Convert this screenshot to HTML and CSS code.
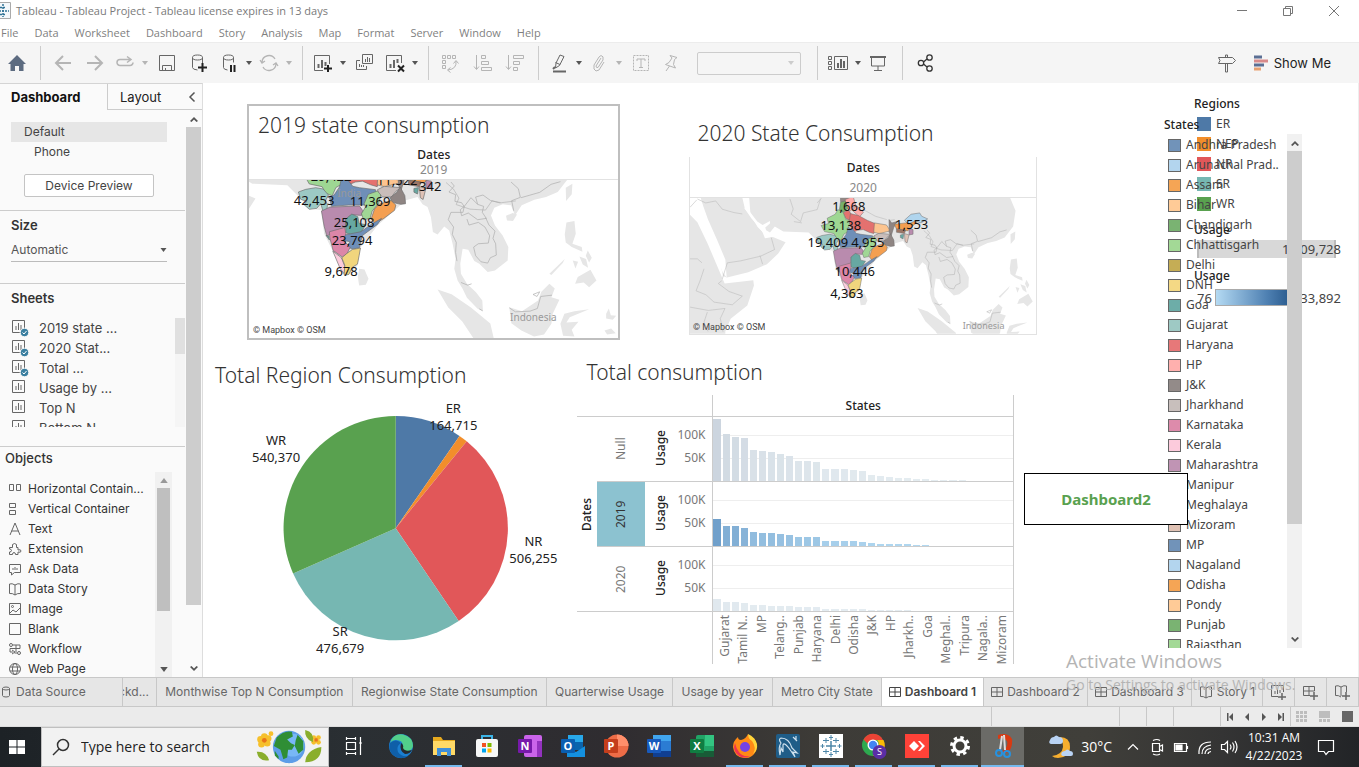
FILE: index.html
```html
<!DOCTYPE html>
<html lang="en">
<head>
<meta charset="utf-8">
<title>Tableau - Tableau Project</title>
<link rel="stylesheet" href="styles.css">
</head>
<body>
<svg class="defs" aria-hidden="true">
  <symbol id="caret" viewBox="0 0 6 4"><path d="M0 0h6L3 4z" fill="currentColor"/></symbol>
  <symbol id="sheet" viewBox="0 0 18 18"><path d="M1.500 1.500h12v12h-12z" fill="none" stroke="#666"/><path d="M5 7v4M7.500 4v7M10 6v5" stroke="#666"/></symbol>
  <symbol id="sheetused" viewBox="0 0 18 18"><path d="M1.500 1.500h12v12h-12z" fill="none" stroke="#666"/><path d="M5 7v4M7.500 4v7M10 6v5" stroke="#666"/><circle cx="13.500" cy="13.500" r="4.300" fill="#3a7fa0" stroke="#fafafa"/><path d="M11.500 13.500l1.500 1.500 2.500-3" fill="none" stroke="#fff"/></symbol>
  <symbol id="dash" viewBox="0 0 12 12"><path d="M.5 1.500h11v9H.5zM.5 6h11M6 1.500v9" fill="none" stroke="currentColor"/></symbol>
  <symbol id="book" viewBox="0 0 14 14"><path d="M7 3v10M7 3Q4 1 1.500 2v9.500Q4.500 11 7 13q2.500-2 5.500-1.500V2Q10 1 7 3z" fill="none" stroke="currentColor"/></symbol>
  <symbol id="chev" viewBox="0 0 8 6"><path d="M0 5l4-4 4 4-1.500 1L4 3.500 1.500 6z" fill="currentColor"/></symbol>

  <symbol id="asia" viewBox="-400 100 1540 640" overflow="visible">
    <g fill="#e6e6e6">
      <path d="M-420 60H955L962 110 985 165 975 230 940 275 905 290 870 298 832 315 812 345 800 315 775 312 750 322 740 345 752 375 775 405 792 440 790 480 752 510 730 515 705 490 690 482 672 448 655 445 648 490 650 520 668 550 695 575 714 600 716 632 700 625 668 592 655 565 640 540 630 505 634 475 625 430 615 390 600 378 580 402 566 395 560 350 550 320 535 312 520 290 485 300 400 375 350 440 340 495 310 525 290 500 240 400 232 330 200 325 165 290 130 255 25 250-10 230-30 255-70 230-110 185-120 60z"/>
      <path d="M345 505l16 2 12 28-8 18-20 2-4-26zM785 346l20-8 13 4-12 20-18-2zM964 262l20-12-2 32-17 20zM966 366l24-4 4 38-10 30 28 10 2 14-32-14-18-14-3-24zM1000 530l38-22 18 32-22 20-16-14-26 4zM1005 468l20 8 6 26-16-10zM1030 450l12 22-8 14-10-20zM985 480l16 4-8 20zM915 520l46-44-6 12-34 36z"/>
      <path d="M580 567l42 14 58 40 58 48 14 60h-54l-44-66-42-42zM795 620l38 12 48-32 10-26 24-24 16 14-10 26 24 8-20 42-4 30-22 32-30 6-38-18-30-22zM960 640l30-8 44-6-58 24-10 16 36-2-20 24 8 20-34-2-8-36zM1085 640l8-16 6 20 16 2-10 12-20-4zM1080 690l20-6 14 14-26 4z"/>
    </g>
    <g transform="translate(-385 -228) scale(1.3755)">
      <path d="M0 150h185L175 246l8 34 20 24 18 30 14 14 8 20 24-4 38 16-22 34-34 32-56 24-64 16-12-4-8-40-22-48L50 246H0zM0 280l40 40 30 62 34 80 18 42 86-10 2 16-20 60-50 40-16 38v90H0z" fill="#e6e6e6"/>
      <path d="M50 250L72 312 100 375 124 432 128 486 116 470 96 420 66 366 36 300 20 258z" fill="#fff"/>
      <path d="M180 276l16 10 24 32 16 10 22-12 0 8-14 12 4 14-12 0-16-22-18-20z" fill="#fff"/>
      <g fill="none" stroke="#b4b4b4" stroke-width="1.500">
        <path d="M40 250l25 12 30-6 20 25 35 10 25 4M18 275l20-22M115 490l15-48 40-6 60-14 42-20-10-36M228 420l8 26M18 430l22 0 14 12M60 460l-12 36-12 30 30 12 24 22 55 8 30-26-40-14-32-24 10-8M18 575l55 10 50-6-14 30 8 40M70 590l-10 30 12 28M318 250l10 30-6 16 28 22 8-26 42-10 10-32M330 318l24 4M400 262l14-16M535 280l40 22 34 10M615 315l18-3M720 345l16 14 12 20-6 14 30 10 34 2 14-20 20 4 32-4"/>
      </g>
      <g stroke="#6d6d6d" stroke-width="1.500" stroke-linejoin="round">
        <path fill="#918885" d="M470 244l22-4 4 14-14 10-12-6z"/>
        <path fill="#ffaaa9" d="M484 252l24-10 8 28-16 16-12-10z"/>
        <path fill="#ffaaa9" d="M505 284l14-14 20 20-12 14z"/>
        <path fill="#77b069" d="M470 260l14-4 8 22-12 12-14-2z"/>
        <path fill="#e4716f" d="M478 292l16-10 8 14-2 20-14-8z"/>
        <path fill="#9ed793" d="M412 330l22-6-4-16 24-12 8-14 16 8 8 22 12 2-4 34-14 8-8 18-14-6-8-14-28-6z"/>
        <path fill="#e4716f" d="M500 294l24 6 26 14 24 10 2 14-6 16-14-4-18-8-16 2-14 6-8-18-4-14z"/>
        <path fill="#fcc48f" d="M572 322l36 6 12 18-34 8-16-4z"/>
        <path fill="#8f8583" d="M616 312l8 10 16-4-10 18-8 26-6-12z"/>
        <path fill="#f49f51" d="M632 326l34-4 24-8 14 2-18 16-14 14-34-6z"/>
        <path fill="#b0d5ee" d="M662 314l20-18 26-4 6 10 18 8-20 12-18-6-20 10z"/>
        <path fill="#9c7565" d="M638 340l28 4-4 10-24-4z"/>
        <path fill="#b98bae" d="M676 340l12 2 0 14-12 2z"/>
        <path fill="#67a8a2" d="M650 358l10-2-2 14-8-4z"/>
        <path fill="#dfc2b6" d="M662 354l14 4-6 24-6-4z"/>
      </g>
    </g>
    <g stroke="#6d6d6d" stroke-width="2" stroke-linejoin="round">
      <path fill="#9cc9c4" d="M163 275l22-8 30-5 22 4 16 18-9 17 6 12-2 20-12-3-6-20-12 14-22 3-16-14 8-10-18-6z"/>
      <path fill="#6f8fb8" d="M256 290l14-6 16-24 6-26 20 6 14 18 20 4 48 6 4 14-14 14-14 18-56 0-52 4z"/>
      <path fill="#c9bdba" d="M400 268l20-10 50 4-16 12-12 16-26 0-12-8z"/>
      <path fill="#8f8583" d="M468 260l14 26 2 24-14 2-26-6-6-14 20-16z"/>
      <path fill="#b98bae" d="M232 332l26-12 88-3 10 14-4 14-30-2-18 14 0 24-24 10-32 16-8-30z"/>
      <path fill="#a0d795" d="M372 282l28-10 10 12-6 24-20 24-6 22-20 4-6-18 12-20-4-10z"/>
      <path fill="#f49f51" d="M404 312l36-12 15 14-4 16-32 24-26 16-12-14 10-30z"/>
      <path fill="#67a8a2" d="M305 356l18-15 18 8 4 20 20 4-14 22-30 8-16-6z"/>
      <path fill="#6f8fb8" d="M300 404l50-10 34-24 28-16-12 18-46 34-8 36-22 4-16-8 10-14-20-4z"/>
      <path fill="#dc86a8" d="M256 394l46-13 3 19-7 20 20 20-8 18-15 12-28-20-10-38z"/>
      <path fill="#67a8a2" d="M246 405l8 2 2 12z"/>
      <path fill="#fccbdc" d="M266 452l26 20 10 26-2 22-12-16z"/>
      <path fill="#f1d57d" d="M293 472l14-12 18-13 24-4-4 22-5 26-15 9-11 22-14 2 2-30z"/>
    </g>
    <g fill="none" stroke="#ababab" stroke-width="2">
      <path d="M620 245l10 12-16 18 20 8-2 20 20 4 8 12M660 318l-4 18-36 0-8 22 16 22-4 22 12 24-2 30 4 26M660 318l20-26 20 20 18 6-4 18 12 18-26 4-28-20-20 8-4-18zM668 356l6 18 28-8 20 14 14 26-4 22-30 2-14 10 6 26 16 18 20 4 8-16 18-8-2-34-8-16 6-22-18-18-10-22M700 312l-6-22 22-6 22 16 30 8M800 245l22 20 6 26-26 10 6 30M830 292l56-16 34-24 28-8M650 546l20 8 12-4M795 622l18 12 44-2 22-8 10-36 34-4M866 582l20-8-8 14zM705 625l10 6"/>
    </g>
  </symbol>
</svg>

<header class="titlebar">
  <svg class="applogo" viewBox="0 0 16 18"><path d="M-1 .5h11.500v16H-1" fill="#f4f8fb" stroke="#aaa"/><path d="M3 2v13M-1 9h10M0 5.500h6M0 12.500h6" stroke="#2f7195" stroke-width="1.500" stroke-dasharray="2 1"/></svg>
  <span class="apptitle">Tableau - Tableau Project - Tableau license expires in 13 days</span>
  <div class="wincontrols">
    <button aria-label="Minimize"><svg viewBox="0 0 12 12"><path d="M1 5.500h10"/></svg></button>
    <button aria-label="Restore"><svg viewBox="0 0 12 12"><path d="M1.500 3.500h7v7h-7zM3.500 3.500v-2h7v7h-2"/></svg></button>
    <button aria-label="Close"><svg viewBox="0 0 12 12"><path d="M1 1l10 10M11 1L1 11"/></svg></button>
  </div>
</header>
<nav class="menubar">
  <button>File</button><button>Data</button><button>Worksheet</button><button>Dashboard</button><button>Story</button><button>Analysis</button><button>Map</button><button>Format</button><button>Server</button><button>Window</button><button>Help</button>
</nav>

<div class="toolbar">
  <div class="group home"><button class="tb" aria-label="Home"><svg viewBox="0 0 20 20"><path d="M10 2l9 9h-2.500v7H12v-5H8v5H3.500v-7H1z" fill="#5c6b80"/></svg></button></div>
  <div class="group">
    <button class="tb off" aria-label="Undo"><svg viewBox="0 0 20 20"><path d="M18 10H3M10 3l-7 7 7 7" stroke-width="2"/></svg></button>
    <button class="tb off" aria-label="Redo"><svg viewBox="0 0 20 20"><path d="M2 10h15M10 3l7 7-7 7" stroke-width="2"/></svg></button>
    <button class="tb sm off" aria-label="Replay"><svg viewBox="0 0 20 20"><path d="M10 6.500H5a3 3 0 000 6h10a3 3 0 003-3M9 6.500h6M12 3.500l4 3-4 3" stroke-width="1.500"/></svg></button>
    <button class="car off" aria-label="Replay options"><svg><use href="#caret"/></svg></button>
    <button class="tb" aria-label="Save"><svg viewBox="0 0 20 20"><path d="M2.500 2.500h15v15h-15zM5.500 17v-4.500h9V17M8.500 17v-2"/></svg></button>
    <button class="tb" aria-label="New data source"><svg viewBox="0 0 20 20"><path d="M3.500 4.500v10q0 2 5 2.500M13.500 4.500v6"/><ellipse cx="8.500" cy="4.500" rx="5" ry="2.500"/><path d="M9 14.500h9M13.500 10v9" stroke="#222" stroke-width="2"/></svg></button>
    <button class="tb sm" aria-label="Pause updates"><svg viewBox="0 0 20 20"><path d="M4.500 4.500v10q0 2 4 2.500M14.500 4.500v5"/><ellipse cx="9.500" cy="4.500" rx="5" ry="2.500"/><path d="M12 12v7M15.500 12v7" stroke="#222" stroke-width="2"/></svg></button>
    <button class="car" aria-label="Pause options"><svg><use href="#caret"/></svg></button>
    <button class="tb sm off" aria-label="Refresh"><svg viewBox="0 0 20 20"><path d="M3 9a7 7 0 0113-3M17 11a7 7 0 01-13 3M1 7l2 3 3-2M19 13l-2-3-3 2" stroke-width="1.300"/></svg></button>
    <button class="car off" aria-label="Refresh options"><svg><use href="#caret"/></svg></button>
  </div>
  <div class="group">
    <button class="tb sm" aria-label="New worksheet"><svg viewBox="0 0 20 20"><path d="M10 17.500H1.500v-15h15V11"/><path d="M5.500 11v4M9 7v8M12.500 9v4" stroke-width="2"/><path d="M11 15.500h8M15 12v7" stroke="#222" stroke-width="2"/></svg></button>
    <button class="car" aria-label="New worksheet options"><svg><use href="#caret"/></svg></button>
    <button class="tb" aria-label="Duplicate"><svg viewBox="0 0 20 20"><path d="M7.500 1.500h10v9h-10zM5 7.500H1.500v9h10V13M10.500 6v3M12.500 4v5M14.500 5v4M4.500 11v3M6.500 12v2M8.500 12v2"/></svg></button>
    <button class="tb sm" aria-label="Clear sheet"><svg viewBox="0 0 20 20"><path d="M11 17.500H1.500v-15h15V10"/><path d="M5.500 11v4M9 7v8M12.500 6v4" stroke-width="2"/><path d="M13 12.500l6 6M19 12.500l-6 6" stroke="#222" stroke-width="2"/></svg></button>
    <button class="car" aria-label="Clear options"><svg><use href="#caret"/></svg></button>
  </div>
  <div class="group">
    <button class="tb off" aria-label="Swap rows and columns"><svg viewBox="0 0 20 20"><path d="M1.500 2.500h3v3h-3zM6.500 2.500h3v3h-3zM11.500 2.500h3v3h-3zM1.500 7.500h3v3h-3zM1.500 12.500h3v3h-3zM15 8q1 8-8 9M12.500 10.500l2.500-3 2.500 3M9.500 14.500l-3 2.500 3 2.500"/></svg></button>
    <button class="tb off" aria-label="Sort ascending"><svg viewBox="0 0 20 20"><path d="M3.500 2v14M1 13.500l2.500 3 2.500-3M8.500 2.500h4v3h-4zM8.500 8.500h7v3h-7zM8.500 14.500h10v3h-10z"/></svg></button>
    <button class="tb off" aria-label="Sort descending"><svg viewBox="0 0 20 20"><path d="M3.500 2v14M1 13.500l2.500 3 2.500-3M8.500 2.500h10v3h-10zM8.500 8.500h6v3h-6zM8.500 14.500h4v3h-4z"/></svg></button>
  </div>
  <div class="group">
    <button class="tb sm" aria-label="Highlight"><svg viewBox="0 0 20 20"><path d="M11 2l4 1.500-4.500 9-4 2.500.5-5zM6.500 9.500l4.500 2"/><path d="M6 14l-2 2" stroke-width="2"/><path d="M4 18.500h13" stroke-width="2"/></svg></button>
    <button class="car" aria-label="Highlight options"><svg><use href="#caret"/></svg></button>
    <button class="tb sm off" aria-label="Group"><svg viewBox="0 0 20 20"><path d="M12 5l-5 8q0 2 2 1.500L14 7q1-4-2-4.500L10 4l-5 8q-1 5 2 6l3-1 5-8"/></svg></button>
    <button class="car off" aria-label="Group options"><svg><use href="#caret"/></svg></button>
    <button class="tb off" aria-label="Mark labels"><svg viewBox="0 0 20 20"><path d="M2.500 2.500h15v15h-15z" stroke-dasharray="2 1"/><path d="M6 8V6h8v2M10 6v9M8 14.500h4"/></svg></button>
    <button class="tb sm off" aria-label="Pin"><svg viewBox="0 0 20 20"><path d="M9 2.500l7 2-2.500 2-1 5 2 3.500-10-3.500 3.500-2 3-4.500zM8.500 13L5 18"/></svg></button>
    <span class="fit"><select aria-label="Fit" disabled><option></option></select><svg><use href="#caret"/></svg></span>
  </div>
  <div class="group wide">
    <button class="tb sm" aria-label="Show cards"><svg class="w22" viewBox="0 0 22 20"><path d="M1.500 3.500h3v3h-3zM1.500 8.500h3v3h-3zM1.500 13.500h3v3h-3zM7.500 3.500h13v13h-13z"/><path d="M11 10v5M14 6v9M17 8v7" stroke-width="2"/></svg></button>
    <button class="car" aria-label="Card options"><svg><use href="#caret"/></svg></button>
    <button class="tb sm" aria-label="Presentation"><svg viewBox="0 0 20 20"><path d="M3.500 4v9h13V4M10 13v4M6 17.500h8"/><path d="M2 4h16" stroke-width="2"/></svg></button>
  </div>
  <div class="group wide2"><button class="tb" aria-label="Share"><svg viewBox="0 0 20 20" class="dark"><circle cx="6" cy="10" r="2.700"/><circle cx="14.500" cy="4.500" r="2.700"/><circle cx="14.500" cy="15.500" r="2.700"/><path d="M8.500 9L12 6M8.500 11l3.500 3"/></svg></button></div>
  <div class="toolright">
    <button class="tb" aria-label="Guide"><svg viewBox="0 0 20 20"><path d="M1.500 4.500h14l3 3-3 3h-14l1.500-3zM8.500 11v8h2v-8M8.500 4V2h2v2"/></svg></button>
    <button class="showme"><svg viewBox="0 0 16 16"><path d="M1 2h8" stroke="#5b6f94" stroke-width="3"/><path d="M1 6h14" stroke="#d88a8a" stroke-width="3"/><path d="M1 10h10" stroke="#5b6f94" stroke-width="3"/><path d="M1 14h7" stroke="#e8a070" stroke-width="3"/></svg>Show Me</button>
  </div>
</div>

<div class="work">
  <aside class="side">
    <div class="sidetabs"><button class="on">Dashboard</button><button class="lay">Layout<svg viewBox="0 0 8 12"><path d="M6.500 1.500L2 6l4.500 4.500"/></svg></button></div>
    <div class="sidebody">
      <div class="sidecol">
        <section class="devices">
          <button class="device on">Default</button>
          <button class="device phone">Phone</button>
          <button class="preview">Device Preview</button>
        </section>
        <section class="size">
          <h2>Size</h2>
          <label class="sizesel"><select aria-label="Size"><option>Automatic</option></select><svg><use href="#caret"/></svg></label>
        </section>
        <section class="sheets">
          <h2>Sheets</h2>
          <div class="listwrap">
            <ul>
              <li><svg><use href="#sheetused"/></svg>2019 state ...</li>
              <li><svg><use href="#sheetused"/></svg>2020 Stat...</li>
              <li><svg><use href="#sheetused"/></svg>Total ...</li>
              <li><svg><use href="#sheet"/></svg>Usage by ...</li>
              <li><svg><use href="#sheet"/></svg>Top N</li>
              <li><svg><use href="#sheet"/></svg>Bottom N</li>
            </ul>
            <div class="sb thin"><i></i></div>
          </div>
        </section>
        <section class="objects">
          <h2>Objects</h2>
          <div class="objwrap">
            <ul>
              <li><svg viewBox="0 0 14 14"><path d="M1.500 2.500h4v6h-4zM8.500 2.500h4v6h-4z"/></svg>Horizontal Contain...</li>
              <li><svg viewBox="0 0 14 14"><path d="M1.500 1.500h6v4h-6zM1.500 8.500h6v4h-6z"/></svg>Vertical Container</li>
              <li><svg viewBox="0 0 14 14"><path d="M2 13L7 1l5 12M3.500 9h7"/></svg>Text</li>
              <li><svg viewBox="0 0 14 14"><path d="M1.500 5.500h3q-1-4 2-4t2 4H10v2.500q3-1 3 1t-3 1v2.500H7.500q0-2-1.500-2t-1.500 2h-3V10q2 0 2-1.500T1.500 7z"/></svg>Extension</li>
              <li><svg viewBox="0 0 14 14"><path d="M1.500 2.500h11v8h-6l-3 2.500v-2.500h-2zM5 8V6M7 8V5M9 8V6"/></svg>Ask Data</li>
              <li><svg><use href="#book"/></svg>Data Story</li>
              <li><svg viewBox="0 0 14 14"><path d="M1.500 1.500h11v11h-11zM2 11l3-3 3 2 4-4"/><circle cx="4.500" cy="4.500" r="1"/></svg>Image</li>
              <li><svg viewBox="0 0 14 14"><path d="M1.500 1.500h11v11h-11z"/></svg>Blank</li>
              <li><svg viewBox="0 0 14 14"><circle cx="3" cy="3" r="1.500"/><circle cx="11" cy="11" r="1.500"/><path d="M5 3h7v3.500H2V10h3M4 8l3 2-3 2M8 3v7M6.500 11H9"/></svg>Workflow</li>
              <li><svg viewBox="0 0 14 14"><circle cx="7" cy="7" r="5.500"/><ellipse cx="7" cy="7" rx="2.500" ry="5.500"/><path d="M2 5h10M2 9h10"/></svg>Web Page</li>
            </ul>
            <div class="sb objsb"><svg><use href="#caret"/></svg><i></i><svg><use href="#caret"/></svg></div>
          </div>
        </section>
      </div>
      <div class="sb main"><svg><use href="#chev"/></svg><i></i><svg><use href="#chev"/></svg></div>
    </div>
  </aside>

  <main class="canvas">
    <div class="row one">
      <article class="sheet sel">
        <h1>2019 state consumption</h1>
        <div class="mapbox">
          <div class="maphead"><b>Dates</b><span>2019</span></div>
          <svg class="map" viewBox="0 0 369 158">
            <svg x="0" y="0" width="369" height="158" viewBox="15 239 1107 474"><use href="#asia" x="-400" y="100" width="1540" height="640"/></svg>
            <g class="faint"><text x="100" y="17">India</text><text x="284" y="141">Indonesia</text></g>
            <g class="num"><text x="82" y="1">29,422</text><text x="148" y="5">11,522</text><text x="181" y="11">342</text><text x="65" y="25">42,453</text><text x="121" y="26">11,369</text><text x="105" y="47">25,108</text><text x="103" y="65">23,794</text><text x="92" y="96">9,678</text></g>
            <text class="credit" x="4" y="153">© Mapbox © OSM</text>
          </svg>
        </div>
      </article>
      <article class="sheet plain">
        <h1>2020 State Consumption</h1>
        <div class="mapbox">
          <div class="maphead tall"><b>Dates</b><span>2020</span></div>
          <svg class="map" viewBox="0 0 346 136">
            <svg x="0" y="0" width="346" height="136" viewBox="18 247 1038 408"><g transform="translate(280 165.600) scale(.727)"><use href="#asia" x="-400" y="100" width="1540" height="640"/></g></svg>
            <g class="faint"><text class="sm" x="294" y="131">Indonesia</text></g>
            <g class="num"><text x="159" y="13">1,668</text><text x="151" y="32">13,138</text><text x="222" y="31">1,553</text><text x="138" y="49">19,409</text><text x="178" y="49">4,955</text><text x="165" y="78">10,446</text><text x="157" y="100">4,363</text></g>
            <text class="credit" x="3" y="132">© Mapbox © OSM</text>
          </svg>
        </div>
      </article>
    </div>

    <div class="row two">
      <article class="sheet pie">
        <h1>Total Region Consumption</h1>
        <svg viewBox="0 0 355 280">
          <g transform="translate(180.500 138)">
            <path fill="#4e79a7" d="M0 0V-112A112 112 0 0163.700-92.100z"/>
            <path fill="#f28e2b" d="M0 0L63.700-92.100A112 112 0 0170.900-86.700z"/>
            <path fill="#e15759" d="M0 0L70.900-86.700A112 112 0 0162.900 92.700z"/>
            <path fill="#76b7b2" d="M0 0L62.900 92.700A112 112 0 01-102.500 45.200z"/>
            <path fill="#59a14f" d="M0 0L-102.500 45.200A112 112 0 010-112z"/>
          </g>
          <g class="num"><text x="238" y="23">ER</text><text x="238" y="40">164,715</text><text x="61" y="55">WR</text><text x="61" y="72">540,370</text><text x="318" y="156">NR</text><text x="318" y="173">506,255</text><text x="125" y="246">SR</text><text x="125" y="263">476,679</text></g>
        </svg>
      </article>
      <article class="sheet bars">
        <h1>Total consumption</h1>
        <div class="chart">
          <div class="colhead">States</div>
          <div class="dates"><b>Dates</b></div>
          <div class="year">Null</div><div class="axis"><b>Usage</b><span class="k1">100K</span><span class="k2">50K</span></div><div class="plot" data-series="0"></div>
          <div class="year hot">2019</div><div class="axis"><b>Usage</b><span class="k1">100K</span><span class="k2">50K</span></div><div class="plot" data-series="1"></div>
          <div class="year">2020</div><div class="axis"><b>Usage</b><span class="k1">100K</span><span class="k2">50K</span></div><div class="plot" data-series="2"></div>
          <div class="foot"></div><div class="names"></div>
        </div>
      </article>
    </div>

    <div class="regions">
      <h3>Regions</h3>
      <ul><li><i class="c-er"></i>ER</li><li><i class="c-nep"></i>NEP</li><li><i class="c-nr"></i>NR</li><li><i class="c-sr"></i>SR</li><li><i class="c-wr"></i>WR</li></ul>
      <h3>Usage</h3>
      <div class="sizebar"><span>1,709,728</span></div>
      <h3>Usage</h3>
      <div class="ramp"><span>76</span><i></i><span>133,892</span></div>
    </div>
    <div class="states">
      <h3>States</h3>
      <div class="statebox"><ul id="states"></ul><div class="sb"><svg><use href="#chev"/></svg><i></i><svg><use href="#chev"/></svg></div></div>
    </div>
    <button class="goto">Dashboard2</button>
    <div class="activate"><strong>Activate Windows</strong><span>Go to Settings to activate Windows.</span></div>
  </main>
</div>

<nav class="tabs">
  <button class="src"><svg viewBox="0 0 12 12"><path d="M2.500 2.500v7q0 1.500 3.500 1.500t3.500-1.500v-7"/><ellipse cx="6" cy="2.500" rx="3.500" ry="1.500"/></svg>Data Source</button>
  <button class="cut"><span>ckd...</span></button>
  <button>Monthwise Top N Consumption</button>
  <button>Regionwise State Consumption</button>
  <button>Quarterwise Usage</button>
  <button>Usage by year</button>
  <button>Metro City State</button>
  <button class="dashtab on"><svg><use href="#dash"/></svg>Dashboard 1</button>
  <button class="dashtab"><svg><use href="#dash"/></svg>Dashboard 2</button>
  <button class="dashtab"><svg><use href="#dash"/></svg>Dashboard 3</button>
  <button class="story"><svg><use href="#book"/></svg>Story 1</button>
  <button class="new" aria-label="New worksheet"><svg viewBox="0 0 16 16"><path d="M8 12.500H1.500v-11h12V8M5 7v3M7.500 5v5M10 6v3"/><path d="M8 13h8M12 9v7" stroke-width="1.500"/></svg></button>
  <button class="new" aria-label="New dashboard"><svg viewBox="0 0 16 16"><path d="M8 11.500H1.500v-9h11V7M1.500 7h11M7 2.500v9"/><path d="M8 12h8M12 8v8" stroke-width="1.500"/></svg></button>
  <button class="new" aria-label="New story"><svg viewBox="0 0 16 16"><path d="M7 3v9M7 3Q4 1 1.500 2v9.500Q4.500 11 7 13M7 3q3-2 5.500-1V8"/><path d="M8 12h8M12 8v8" stroke-width="1.500"/></svg></button>
</nav>

<div class="status">
  <span class="s1"></span><span class="s2"></span><span class="s3"></span><span class="s4"></span>
  <div class="pager">
    <button aria-label="First"><svg viewBox="0 0 8 8"><path d="M1 0h1.500v8H1zM7 0v8L3 4z"/></svg></button>
    <button aria-label="Previous"><svg viewBox="0 0 8 8"><path d="M6 0v8L2 4z"/></svg></button>
    <button aria-label="Next"><svg viewBox="0 0 8 8"><path d="M2 0v8l4-4z"/></svg></button>
    <button aria-label="Last"><svg viewBox="0 0 8 8"><path d="M5.500 0H7v8H5.500zM1 0v8l4-4z"/></svg></button>
  </div>
  <div class="views">
    <button aria-label="Sheet sorter"><svg viewBox="0 0 12 12"><path fill="#bdbdbd" d="M0 0h3v3H0zM4 0h3v3H4zM8 0h3v3H8zM0 4h3v3H0zM4 4h3v3H4zM8 4h3v3H8zM0 8h3v3H0zM4 8h3v3H4zM8 8h3v3H8z"/></svg></button>
    <button aria-label="Filmstrip"><svg viewBox="0 0 12 12"><path fill="#bdbdbd" d="M0 0h11v7H0zM0 8h3v3H0zM4 8h3v3H4zM8 8h3v3H8z"/></svg></button>
    <button aria-label="Tabs"><svg viewBox="0 0 12 12"><path fill="#666" d="M0 0h11v11H0z"/></svg></button>
  </div>
</div>

<footer class="taskbar">
  <button class="start" aria-label="Start"><svg viewBox="0 0 16 16"><path fill="#fff" d="M0 1h7.500v6.500H0zM8.500 1H16v6.500H8.500zM0 8.500h7.500V15H0zM8.500 8.500H16V15H8.500z"/></svg></button>
  <label class="search">
    <svg class="lens" viewBox="0 0 18 18"><circle cx="11" cy="7" r="5.500"/><path d="M7 11l-6 6"/></svg>
    <input type="search" placeholder="Type here to search" aria-label="Type here to search">
    <svg class="earth" viewBox="0 0 76 40">
      <g fill="#f6c02c"><circle cx="8" cy="17" r="3.500"/><circle cx="14" cy="16" r="3.500"/><circle cx="7" cy="12" r="3.500"/><circle cx="15" cy="11" r="3.500"/><circle cx="11" cy="9" r="3.500"/><circle cx="18" cy="6" r="2.500"/><circle cx="63" cy="10" r="2.500"/><circle cx="68" cy="10" r="2.500"/><circle cx="63" cy="15" r="2.500"/><circle cx="68" cy="15" r="2.500"/></g><circle cx="11" cy="13" r="2.500" fill="#e8751a"/><circle cx="65.500" cy="12.500" r="2" fill="#e8751a"/>
      <path d="M3 25q10-1 13 9Q5 36 3 25zM54 2q10 2 8 13Q53 11 54 2zM54 36q1-13 17-16 0 16-17 16z" fill="#8aae2c"/>
      <circle cx="37" cy="20" r="17" fill="#5d9de8"/><circle cx="41" cy="18" r="12" fill="#78b7f6"/>
      <path d="M24 10q8-8 16-6l1 5-6 3 4 4 4 2-3 5-4 0-1 8-4 2-3-10-7-4zM46 7l6 7 0 9-5 4-4-8 1-6zM22 24l4 6 0 3-4-4z" fill="#2f8e35"/>
    </svg>
  </label>
  <button class="app view" aria-label="Task view"><svg viewBox="0 0 26 26" class="line"><path d="M5.500 7V4M14.500 7V4M5.500 9.500h9v7h-9zM5.500 19v3M14.500 19v3M5.500 5.500h9M5.500 20.500h9M19.500 4v18M18 10h3"/></svg></button>
  <button class="app" aria-label="Edge"><svg viewBox="0 0 26 26"><circle cx="13" cy="13" r="12" fill="#1b7fd1"/><path d="M2 10Q5 0 15 1.500 25 4 25 13q-1 6-8 5-4-1-2-5 0-6-7-6-4 0-6 3z" fill="#52cf8a"/><path d="M2 10q6-5 11 0-5 3-3 9 3 5 10 4-8 5-15-1-5-5-3-12z" fill="#0f5fa8"/><path d="M13 10q3 2 2 5 2 4 9 2-2 4-7 4-6-3-4-11z" fill="#262b2f"/></svg></button>
  <button class="app run" aria-label="File Explorer"><svg viewBox="0 0 26 26"><path d="M2 4h8l2 3h12v15H2z" fill="#e6a91e"/><path d="M2 8h22v14H2z" fill="#ffd966"/><path d="M6 15h14v8h-4v-4h-6v4H6z" fill="#3f8fd9"/></svg></button>
  <button class="app" aria-label="Store"><svg viewBox="0 0 26 26"><path d="M8 7V3h10v4" fill="none" stroke="#3cb4e7" stroke-width="2"/><rect x="2" y="6" width="22" height="18" rx="2" fill="#f7f7f7"/><path fill="#f25022" d="M8 10h4v4H8z"/><path fill="#7fba00" d="M13.500 10h4v4h-4z"/><path fill="#00a4ef" d="M8 15.500h4v4H8z"/><path fill="#ffb900" d="M13.500 15.500h4v4h-4z"/></svg></button>
  <button class="app" aria-label="OneNote"><svg viewBox="0 0 26 26"><rect x="7" y="2" width="18" height="22" rx="2" fill="#ca64ea"/><path d="M20 8h5v16h-5z" fill="#9332bf"/><rect x="1" y="6" width="14" height="14" rx="1" fill="#7719aa"/><text x="8" y="17">N</text></svg></button>
  <button class="app" aria-label="Outlook"><svg viewBox="0 0 26 26"><path d="M8 2h15v14H8z" fill="#28a8ea"/><path d="M15 9h8v8h-8z" fill="#0a64ad"/><path d="M7 14l9 5 9-6v11H7z" fill="#1490df"/><rect x="1" y="6" width="14" height="14" rx="1" fill="#0a5eb0"/><text x="8" y="17">O</text></svg></button>
  <button class="app" aria-label="PowerPoint"><svg viewBox="0 0 26 26"><circle cx="14" cy="13" r="11.500" fill="#ed6c47"/><path d="M14 1.500A11.500 11.500 0 0125.500 13H14z" fill="#ff8f6b"/><rect x="1" y="6" width="14" height="14" rx="1" fill="#c43e1c"/><text x="8" y="17">P</text></svg></button>
  <button class="app" aria-label="Word"><svg viewBox="0 0 26 26"><rect x="7" y="2" width="18" height="22" rx="2" fill="#2b7cd3"/><path d="M7 2h18v6H7z" fill="#41a5ee"/><path d="M7 18h18v6H7z" fill="#103f91"/><rect x="1" y="6" width="14" height="14" rx="1" fill="#185abd"/><text x="8" y="17">W</text></svg></button>
  <button class="app" aria-label="Excel"><svg viewBox="0 0 26 26"><rect x="7" y="2" width="18" height="22" rx="2" fill="#21a366"/><path d="M16 2h9v11h-9z" fill="#33c481"/><path d="M7 18h18v6H7z" fill="#185c37"/><rect x="1" y="6" width="14" height="14" rx="1" fill="#107c41"/><text x="8" y="17">X</text></svg></button>
  <button class="app run" aria-label="Firefox"><svg viewBox="0 0 26 26"><path d="M16 1q1 4 4 5l2-1q4 8 2 13-4 8-12 7Q2 24 1 14q0-6 5-10 0 3 3 3 5-1 7-6z" fill="#ff8a16"/><path d="M16 1q0 5 4 7 5 7 1 13 5-4 4-10Q23 4 16 1z" fill="#ffd43a"/><path d="M3 10q-3 8 4 13 6 3 11 0-8 1-11-4-3-4-4-9z" fill="#f0344e"/><circle cx="13" cy="14" r="5" fill="#7542e5"/></svg></button>
  <button class="app run" aria-label="MySQL Workbench"><svg viewBox="0 0 26 26"><rect x="1" y="1" width="24" height="24" rx="2" fill="#1f5d88"/><path d="M5 22Q3 14 6 10 3 6 6 5q8 0 11 10l5 5-4-1 2 5-4-6Q9 8 8 12l0 7-2-4zM18 4l4 4M21 3l0 4" fill="none" stroke="#cfe1ee" stroke-width="1.200"/></svg></button>
  <button class="app run" aria-label="Tableau"><svg viewBox="0 0 26 26"><path fill="#fff" d="M1 1h24v24H1z"/><path d="M13 8v10M8 13h10" stroke="#4c86a8" stroke-width="1.500"/><path d="M13 2v5M11 4.500h4M13 19v5M11 21.500h4M2.500 13h4M4.500 11v4M19.500 13h4M21.500 11v4M5 7.500h6M8 5v5M15 7.500h6M18 5v5M5 18.500h6M8 16v5M15 18.500h6M18 16v5" stroke="#4c86a8"/></svg></button>
  <button class="app run" aria-label="Chrome"><svg viewBox="0 0 26 26"><circle cx="12" cy="12" r="11" fill="#2da94f"/><path d="M2.500 6.500A11 11 0 0122 7H12a5 5 0 00-5 4z" fill="#ea4335"/><path d="M22.500 7A11 11 0 0112 23l5-9q2-4-1-7z" fill="#fbbc05"/><circle cx="12" cy="12" r="5.500" fill="#fff"/><circle cx="12" cy="12" r="4.200" fill="#4285f4"/><circle cx="18.500" cy="19" r="7" fill="#5b2ea6"/><text class="tiny" x="18.500" y="22">S</text></svg></button>
  <button class="app run" aria-label="AnyDesk"><svg viewBox="0 0 26 26"><path fill="#ff4238" d="M1 1h24v24H1z"/><path d="M10 8l5 5-5 5-5-5zM14 8l2 0 5 5-5 5-2 0 4-5z" fill="#fff"/></svg></button>
  <button class="app run" aria-label="Settings"><svg viewBox="0 0 26 26"><circle cx="13" cy="13" r="6" fill="none" stroke="#fff" stroke-width="3"/><circle cx="13" cy="13" r="8.500" fill="none" stroke="#fff" stroke-width="3" stroke-dasharray="3.400 3.280"/></svg></button>
  <button class="app run on" aria-label="Snipping Tool"><svg viewBox="0 0 26 26"><path d="M8 2q10-3 14 4 1 10-5 14l-6-1q8-5 6-11-3-4-9-2z" fill="#d83a12"/><path d="M12 3l-2 14M14 2l1 15" stroke="#ddd" stroke-width="2"/><circle cx="9" cy="20" r="3" fill="none" stroke="#2792e0" stroke-width="2"/><circle cx="17" cy="21" r="3" fill="none" stroke="#2792e0" stroke-width="2"/></svg></button>
  <div class="tray">
    <button class="weather"><svg viewBox="0 0 26 26"><path d="M12 3q10 0 10 10T10 24q-4 0-6-2 10-1 11-9 0-6-3-10z" fill="#f7ae2e"/><path d="M3 10q-3-1-1-4 1-3 4-3 2-3 5 0 4 0 4 4 0 3-3 3zM15 22q-3-1-1-4 2-1 3-1 2-3 5 0 3 0 3 3 0 2-2 2z" fill="#b9d3f4"/></svg>30°C</button>
    <button aria-label="Hidden icons"><svg viewBox="0 0 18 18" class="line"><path d="M4 11.500l5-5 5 5"/></svg></button>
    <button aria-label="Meet now"><svg viewBox="0 0 18 18" class="line"><path d="M4.500 5.500h7v8h-7zM11.500 8.500l3-1.500v6l-3-1.500M5 2.500q4-2 7 0M5 16q4 2 7 0"/></svg></button>
    <button aria-label="Battery"><svg viewBox="0 0 18 18" class="line"><path d="M2.500 5.500h12v8h-12zM15.500 8v3"/><path d="M4 7h6v5H4z" fill="#fff"/></svg></button>
    <button aria-label="Wi-Fi"><svg viewBox="0 0 18 18" class="line"><path d="M3 16Q2 4 15 4M6 16q0-8 9-9M9 16q0-5 6-5.500M12 16q0-2 3-2.500"/></svg></button>
    <button aria-label="Volume"><svg viewBox="0 0 18 18" class="line"><path d="M1.500 6.500h3l3-3v11l-3-3h-3zM10 6.500q2 2.500 0 5M12.500 4.500q3 4.500 0 9M15 3q4 6 0 12"/></svg></button>
    <div class="clock"><span>10:31 AM</span><span>4/22/2023</span></div>
    <button class="note" aria-label="Notifications"><svg viewBox="0 0 18 18" class="line"><path d="M1.500 2.500h15v11h-5L9 16.500l-2-3H1.500z"/></svg></button>
  </div>
</footer>
<script src="script.js"></script>
</body>
</html>
```
FILE: styles.css
```css
* { box-sizing: border-box; }
body { margin: 0; height: 100vh; display: flex; flex-direction: column; background: #fff; font: 12px/16px "Open Sans", "Noto Sans", sans-serif; color: #333; overflow: hidden; }
button, select, input { font: inherit; color: inherit; border: 0; background: none; padding: 0; margin: 0; }
ul { list-style: none; margin: 0; padding: 0; }
h1, h2, h3 { margin: 0; }
svg { display: block; flex: none; }
.defs { position: absolute; width: 0; height: 0; }

.titlebar { flex: none; display: flex; align-items: center; height: 22px; color: #7a7a7a; font-size: 11px; }
.applogo { width: 16px; height: 18px; }
.apptitle { flex: 1; }
.wincontrols { display: flex; padding-right: 2px; }
.wincontrols button { width: 46px; height: 20px; display: grid; place-items: center; }
.wincontrols svg { width: 12px; height: 12px; fill: none; stroke: #777; }
.menubar { flex: none; display: flex; gap: 16px; height: 20px; padding: 2px 0 0 1px; color: #7f7f7f; font-size: 11px; }

.toolbar { flex: none; display: flex; align-items: center; height: 41px; background: #f5f5f5; border-top: 1px solid #ececec; }
.group { display: flex; align-items: center; height: 34px; padding: 0 7px 0 6px; border-right: 1px solid #ccc; }
.group.home { width: 41px; padding: 0 0 0 1px; }
.group.wide { padding-right: 10px; }
.group.wide2 { border: 0; }
.tb { width: 32px; height: 28px; display: grid; place-items: center; }
.tb.sm { width: 28px; }
.tb svg { width: 20px; height: 20px; fill: none; stroke: #666; }
.tb svg.w22 { width: 22px; }
.tb svg.dark { stroke: #333; stroke-width: 1.300; }
.home svg { stroke: none; }
.tb.off svg { stroke: #b5b5b5; }
.car { width: 12px; height: 28px; display: grid; place-items: center; color: #555; }
.car.off { color: #b5b5b5; }
.car svg { width: 6px; height: 4px; }
.fit { display: flex; align-items: center; width: 104px; height: 23px; margin: 0 9px 0 12px; border: 1px solid #ccc; border-radius: 2px; color: #ccc; padding-right: 5px; }
.fit select { flex: 1; appearance: none; }
.fit svg { width: 8px; height: 4px; }
.toolright { margin-left: auto; display: flex; align-items: center; padding-right: 28px; }
.showme { display: flex; align-items: center; gap: 5px; font: 13px/16px Inter, sans-serif; color: #222; margin-left: 10px; }
.showme svg { width: 16px; height: 16px; }

.work { flex: 1; display: flex; min-height: 0; }
.side { width: 203px; flex: none; display: flex; flex-direction: column; background: #fafafa; border-right: 1px solid #ddd; font: 13px/20px Inter, sans-serif; color: #444; border-top: 1px solid #d4d4d4; }
.sidetabs { display: flex; height: 26px; }
.sidetabs button { text-align: left; padding-left: 11px; color: #222; }
.sidetabs .on { width: 107px; font-weight: 700; color: #111; }
.sidetabs .lay { flex: 1; display: flex; justify-content: space-between; align-items: center; padding: 0 6px 0 12px; border-left: 1px solid #ccc; border-bottom: 1px solid #ccc; }
.lay svg { width: 8px; height: 12px; fill: none; stroke: #555; stroke-width: 1.500; }
.sidebody { flex: 1; display: flex; min-height: 0; }
.sidecol { flex: 1; display: flex; flex-direction: column; min-width: 0; }
.side h2 { font-size: 13px; line-height: 20px; font-weight: 600; color: #333; }
.side section { border-top: 1px solid #ccc; margin-right: 1px; padding: 4px 0 0 11px; }
.side .devices { border: 0; padding: 12px 18px 13px 11px; display: flex; flex-direction: column; font-size: 12px; }
.device { text-align: left; height: 20px; padding-left: 13px; }
.device.on { background: #e6e6e6; }
.device.phone { padding-left: 23px; }
.preview { height: 23px; margin: 12px 13px 0; border: 1px solid #c4c4c4; border-radius: 2px; background: #fff; line-height: 20px; }
.side .size { height: 73px; padding-right: 18px; }
.sizesel { display: flex; align-items: center; border-bottom: 1px solid #bbb; height: 24px; margin-top: 3px; font-size: 12px; color: #555; }
.sizesel select { flex: 1; appearance: none; }
.sizesel svg { width: 7px; height: 4px; }
.side .sheets { height: 163px; }
.side .objects h2 { font-weight: 500; }
.listwrap { display: flex; height: 109px; overflow: hidden; margin-top: 10px; }
.listwrap ul { flex: 1; }
.sheets li { display: flex; align-items: center; gap: 10px; height: 20px; }
.sheets li svg { width: 18px; height: 18px; }
.sb { display: flex; flex-direction: column; align-items: center; width: 15px; background: #f1f1f1; color: #555; }
.sb i { width: 100%; background: #cdcdcd; }
.sb svg { width: 8px; height: 6px; margin: 6px 0 5px; }
.sb svg:last-child { margin-top: auto; transform: rotate(180deg); }
.sb.thin { width: 10px; background: #f5f5f5; }
.thin i { height: 36px; background: #e0e0e0; }
.sb.main { background: #fafafa; margin-right: 1px; }
.main i { flex: 0 0 478px; }
.side .objects { flex: 1; display: flex; flex-direction: column; min-height: 0; padding: 1px 13px 0 5px; font-size: 12px; }
.objwrap { flex: 1; display: flex; min-height: 0; margin-top: 4px; }
.objwrap ul { flex: 1; padding: 7px 0 0 3px; overflow: hidden; white-space: nowrap; }
.objects li { display: flex; align-items: center; gap: 6px; height: 20px; color: #333; }
.objects li svg { width: 14px; height: 14px; fill: none; stroke: #666; color: #666; }
.objsb { width: 17px; }
.objsb i { width: 13px; height: 123px; background: #bfbfbf; }
.objsb svg { width: 8px; height: 5px; }
.objsb svg:first-child { transform: rotate(180deg); color: #999; }
.objsb svg:last-child { transform: none; }

.canvas { flex: 1; position: relative; border-right: 1px solid #eee; font-family: "Noto Sans", sans-serif; }
.row { display: flex; align-items: flex-start; }
.row.one { padding: 21px 321px 0 44px; gap: 69px; }
.row.two { padding: 18px 344px 0 12px; gap: 7px; }
.sheet { min-width: 0; }
.sheet h1 { font: 300 21px/28px "Noto Sans", "Open Sans", sans-serif; color: #333; white-space: nowrap; }
.sel { flex: 370 1 0; border: 2px solid #bfbfbf; }
.plain { flex: 348 1 0; padding-top: 15px; }
.sel h1 { padding: 5px 0 8px 9px; }
.plain h1 { padding: 0 0 10px 8px; }
.mapbox { border: 1px solid #e2e2e2; border-top: 0; }
.sel .mapbox { border-width: 0; }
.maphead { display: flex; flex-direction: column; align-items: center; height: 33px; line-height: 15px; border-bottom: 1px solid #e2e2e2; }
.maphead.tall { height: 41px; padding-top: 1px; line-height: 20px; }
.maphead span { color: #888; }
b, h3, .colhead { font-weight: 500; color: #222; }
.map { width: 100%; height: auto; overflow: hidden; }
.num text { font-size: 13px; fill: #111; text-anchor: middle; }
.pie .num text { fill: #222; }
.faint text { font-size: 10px; fill: #999; text-anchor: middle; }
.faint text.sm { font-size: 9px; }
.credit { font: 9px Roboto, sans-serif; fill: #444; }
.pie { flex: 355 1 0; padding-top: 3px; }
.pie svg { width: 100%; height: auto; margin-top: 1px; }
.bars { flex: 436 1 0; }
.bars h1 { padding-left: 9px; }

.chart { display: grid; grid-template: 21px repeat(3, 65px) 53px / 20px 48px 67px 1fr; margin-top: 9px; line-height: 14px; color: #777; }
.colhead { grid-column: 4; text-align: center; border: 1px solid #ccc; border-width: 0 1px; line-height: 22px; }
.dates { grid-column: 1; grid-row: 2 / 5; border-top: 1px solid #ccc; }
.year { grid-column: 2; font-size: 12px; border-bottom: 1px solid #ccc; }
.year:nth-child(3) { border-bottom: 1px solid #ccc; }
.year.hot { background: #8cc2d0; color: #333; }
.dates, .year { display: grid; place-items: center; }
.dates b, .year, .axis b { writing-mode: vertical-rl; transform: rotate(180deg); }
.axis { display: grid; grid-template-columns: 32px 1fr; grid-template-rows: 11px 23px 23px; border-top: 1px solid #ccc; text-align: right; padding-right: 7px; }
.axis b { grid-row: 1 / 4; justify-self: center; align-self: center; text-align: center; margin-top: 5px; }
.k1 { grid-area: 2 / 2; }
.k2 { grid-area: 3 / 2; }
.plot { display: grid; grid-template-columns: repeat(33, 1fr); align-items: end; border: 1px solid #ccc; border-bottom: 0; background: linear-gradient(#eee, #eee) 0 18px / 100% 1px no-repeat, linear-gradient(#eee, #eee) 0 41px / 100% 1px no-repeat; }
.plot i { margin-right: 2px; }
.foot { grid-column: 1 / 4; border-top: 1px solid #ccc; }
.names { grid-column: 4; display: grid; grid-template-columns: repeat(33, 1fr); border: 1px solid #ccc; border-bottom: 0; overflow: hidden; padding-top: 3px; }
.names span { writing-mode: vertical-rl; transform: rotate(180deg); justify-self: center; align-self: start; white-space: nowrap; line-height: 14px; }

.regions { position: absolute; right: 9px; top: 11px; width: 155px; color: #444; }
.regions h3, .states h3 { font-size: 12px; line-height: 20px; }
.regions li { display: flex; align-items: center; gap: 5px; height: 20px; }
.regions li i { width: 14px; height: 14px; margin-left: 3px; }
.c-er { background: #4e79a7; } .c-nep { background: #f28e2b; } .c-nr { background: #e15759; } .c-sr { background: #76b7b2; } .c-wr { background: #59a14f; }
.regions ul { margin-bottom: 6px; }
.sizebar { display: flex; justify-content: flex-end; background: #d8d8d8; border: 1px solid #bbb; border-width: 0 2px; height: 18px; margin: 0 13px 8px 3px; font-size: 13px; line-height: 18px; }
.sizebar span { margin-right: -7px; }
.ramp { display: flex; align-items: center; gap: 3px; margin-top: 3px; font-size: 13px; padding-left: 3px; }
.ramp i { width: 75px; height: 17px; border: 1px solid #aaa; background: linear-gradient(90deg, #b4daf3, #4e80b2 70%, #2b5c8f); }
.states { position: absolute; right: 56px; top: 32px; width: 138px; color: #444; }
.statebox { display: flex; height: 514px; overflow: hidden; }
.statebox ul { flex: 1; white-space: nowrap; padding-top: 1px; }
.states h3 { line-height: 19px; }
.states li { display: flex; align-items: center; gap: 5px; height: 20px; padding-left: 4px; }
.states li i { width: 13px; height: 13px; border: 1px solid #666; }
.states .sb i { flex: 0 0 373px; }
.goto { position: absolute; right: 170px; top: 390px; width: 164px; height: 52px; background: #fff; border: 1px solid #000; font-size: 15px; font-weight: 700; color: #59a14f; }
.activate { position: absolute; right: 56px; bottom: -18px; width: 236px; display: flex; flex-direction: column; gap: 2px; color: #b4b4b4; white-space: nowrap; font-family: "Open Sans", sans-serif; z-index: 2; }
.activate strong { font-weight: 400; font-size: 19px; line-height: 24px; }
.activate span { font-size: 14px; line-height: 20px; }

.tabs { flex: none; display: flex; height: 30px; background: #e6e6e6; border: 1px solid #c8c8c8; border-width: 1px 0; font: 12px/16px Inter, sans-serif; color: #666; }
.tabs button { flex: 1 1 auto; display: flex; align-items: center; justify-content: center; gap: 4px; border-right: 1px solid #c8c8c8; white-space: nowrap; padding: 0 4px; }
.tabs .src { flex: 0 0 123px; justify-content: flex-start; padding-left: 0; }
.tabs .cut { flex: 0 0 34px; overflow: hidden; justify-content: flex-end; padding-right: 7px; }
.tabs .dashtab { flex: 0 0 104px; }
.tabs .on { flex-basis: 102px; background: #fff; color: #444; font-weight: 600; }
.tabs svg { width: 12px; height: 12px; fill: none; stroke: #666; }
.tabs .story { flex: 0 0 71px; }
.tabs .story svg { width: 14px; height: 14px; }
.tabs .new { flex: 0 0 32px; }
.tabs .new svg { width: 16px; height: 16px; }
.status { flex: none; display: flex; height: 20px; background: #ebebeb; justify-content: flex-end; border-bottom: 1px solid #ddd; }
.status > span { border-left: 1px solid #c8c8c8; }
.s1 { width: 128px; } .s2, .s3 { width: 27px; } .s4 { width: 47px; }
.pager { display: flex; align-items: center; border: 1px solid #c8c8c8; border-width: 0 1px; width: 71px; justify-content: space-around; }
.pager svg { width: 8px; height: 8px; fill: #555; }
.views { display: flex; align-items: center; width: 68px; justify-content: space-around; }
.views svg { width: 12px; height: 12px; }

.taskbar { flex: none; display: flex; align-items: stretch; height: 40px; background: linear-gradient(90deg, #1d2226, #2a2f33 26%, #2f2c30 45%, #3d3b37 60%, #403f3a 80%, #343434 90%, #222427); color: #fff; }
.taskbar button { display: grid; place-items: center; }
.start { width: 41px; padding-right: 8px !important; }
.start svg { width: 16px; height: 16px; }
.search { display: flex; align-items: center; width: 288px; background: #f2f2f2; border: 1px solid #c0c0c0; color: #333; padding-left: 10px; }
.lens { width: 18px; height: 18px; fill: none; stroke: #333; stroke-width: 1.500; }
.search input { flex: 1; min-width: 0; padding-left: 11px; font-size: 14px; }
.search input::placeholder { color: #222; opacity: 1; }
.earth { width: 76px; height: 38px; }
.app { width: 43px; border-bottom: 2px solid transparent !important; }
.app.view { width: 50px; }
.app.run { border-image: linear-gradient(90deg, transparent 10%, #76b9ed 10%, #76b9ed 90%, transparent 90%) 1; border-width: 0 0 2px !important; }
.app.on { background: #6b6b67; border-image: none; border-bottom-color: #76b9ed !important; }
.app svg { width: 26px; height: 26px; }
.app text { font: 700 11px "Open Sans", sans-serif; fill: #fff; text-anchor: middle; }
.app text.tiny { font-size: 9px; font-weight: 400; }
.line { fill: none; stroke: #fff; stroke-width: 1.200; }
.tray { flex: 1; display: flex; align-items: center; justify-content: flex-end; padding-right: 21px; }
.tray svg { width: 18px; height: 18px; }
.tray button { width: 24px; }
.tray .weather { display: flex; align-items: center; gap: 7px; width: auto; font-size: 14px; margin-right: 9px; }
.tray .weather svg { width: 26px; height: 26px; }
.clock { display: flex; flex-direction: column; text-align: center; width: 60px; line-height: 18px; margin: 0 10px 0 3px; white-space: nowrap; }
```
FILE: script.js
```js
const series = [
  [62, 47, 44, 43, 31, 30, 29, 27, 25, 20, 20, 19, 12, 12, 12, 11, 10, 6, 5, 4, 3, 3, 2, 2, 1, 1, 1, 1],
  [27, 20, 20, 18, 14, 13, 13, 12, 11, 9, 9, 9, 5, 5, 5, 5, 4, 3, 2, 2, 2, 2, 1, 1],
  [12, 9, 9, 8, 6, 6, 5, 5, 5, 4, 4, 4, 2, 2, 2, 2, 2, 1, 1, 1, 1, 1]
];
const ends = [
  [[204, 213, 223], [229, 237, 241]],
  [[112, 160, 203], [180, 218, 242]],
  [[224, 232, 238], [229, 237, 242]]
];
const mix = (a, b, t) => `rgb(${a.map((v, i) => Math.round(v + (b[i] - v) * t)).join(',')})`;

document.querySelectorAll('.plot').forEach((plot, s) => {
  const peak = series[s][0];
  series[s].forEach(v => {
    const bar = document.createElement('i');
    bar.style.height = `${v / 64 * 100}%`;
    bar.style.background = mix(ends[s][1], ends[s][0], v / peak);
    plot.append(bar);
  });
});

const names = ['Gujarat', 'Tamil N..', 'MP', 'Telang..', 'Punjab', 'Haryana', 'Delhi', 'Odisha', 'J&K', 'HP', 'Jharkh..', 'Goa', 'Meghal..', 'Tripura', 'Nagala..', 'Mizoram'];
names.forEach((name, i) => {
  const label = document.createElement('span');
  label.textContent = name;
  label.style.gridColumn = (i + 1) * 2;
  label.style.gridRow = 1;
  document.querySelector('.names').append(label);
});

const states = [
  ['Andhra Pradesh', '#7193b9'], ['Arunachal Prad..', '#b3d5ee'], ['Assam', '#f5a555'], ['Bihar', '#ffcb97'],
  ['Chandigarh', '#7ab372'], ['Chhattisgarh', '#a3d996'], ['Delhi', '#c5ad55'], ['DNH', '#f4d985'],
  ['Goa', '#6dada8'], ['Gujarat', '#9ec9c4'], ['Haryana', '#e77879'], ['HP', '#ffb0ae'], ['J&K', '#938b89'],
  ['Jharkhand', '#c8bfbc'], ['Karnataka', '#dd8bab'], ['Kerala', '#fccbdc'], ['Maharashtra', '#c094b4'],
  ['Manipur', '#dcb0cf'], ['Meghalaya', '#b09080'], ['Mizoram', '#e0c2b4'], ['MP', '#7193b9'],
  ['Nagaland', '#b3d5ee'], ['Odisha', '#f5a555'], ['Pondy', '#ffcb97'], ['Punjab', '#7ab372'], ['Rajasthan', '#a3d996']
];
states.forEach(([name, color]) => {
  const item = document.createElement('li');
  const key = document.createElement('i');
  key.style.background = color;
  item.append(key, name);
  document.getElementById('states').append(item);
});
```
